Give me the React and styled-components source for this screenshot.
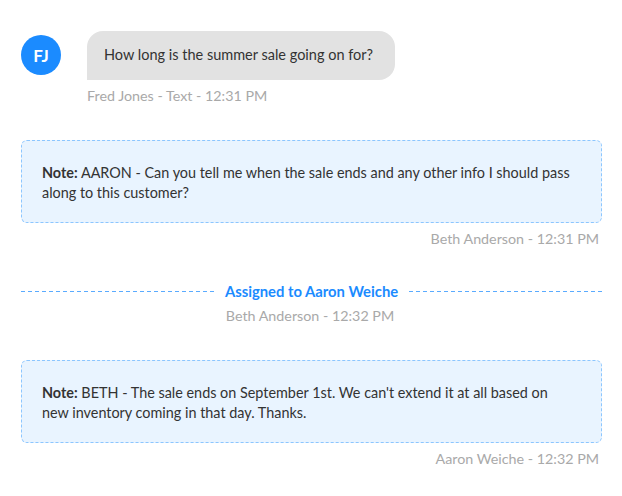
import styled, { createGlobalStyle } from "styled-components";

const GlobalStyle = createGlobalStyle`
  body {
    margin: 0;
    background: #ffffff;
    font-family: "Lato", "Noto Sans", sans-serif;
  }
`;

const Thread = () => {
  return (
    <>
      <GlobalStyle />
      <Page>
        <MessageRow>
          <Avatar>FJ</Avatar>
          <MessageBody>
            <Bubble>How long is the summer sale going on for?</Bubble>
            <Meta>Fred Jones - Text - 12:31 PM</Meta>
          </MessageBody>
        </MessageRow>

        <NoteBlock>
          <NoteBox>
            <strong>Note:</strong> AARON - Can you tell me when the sale ends
            and any other info I should pass along to this customer?
          </NoteBox>
          <Meta align="right">Beth Anderson - 12:31 PM</Meta>
        </NoteBlock>

        <EventBlock>
          <Divider>
            <DividerText>Assigned to Aaron Weiche</DividerText>
          </Divider>
          <Meta align="center">Beth Anderson - 12:32 PM</Meta>
        </EventBlock>

        <NoteBlock>
          <NoteBox>
            <strong>Note:</strong> BETH - The sale ends on September 1st. We
            can't extend it at all based on new inventory coming in that day.
            Thanks.
          </NoteBox>
          <Meta align="right">Aaron Weiche - 12:32 PM</Meta>
        </NoteBlock>
      </Page>
    </>
  );
};

const Page = styled.div`
  width: 622px;
  box-sizing: border-box;
  padding: 31px 20px 0 21px;
  display: flex;
  flex-direction: column;
`;

const MessageRow = styled.div`
  display: flex;
  align-items: flex-start;
  gap: 26px;
`;

const Avatar = styled.div`
  width: 40px;
  height: 40px;
  margin-top: 4px;
  border-radius: 50%;
  background: #1b8bff;
  color: #fff;
  font-weight: 700;
  font-size: 17px;
  display: flex;
  align-items: center;
  justify-content: center;
  flex-shrink: 0;
`;

const MessageBody = styled.div`
  display: flex;
  flex-direction: column;
  align-items: flex-start;
`;

const Bubble = styled.div`
  background: #e2e2e2;
  color: #333;
  font-size: 14.5px;
  line-height: 20px;
  padding: 14px 22px 15px 17px;
  border-radius: 16px 16px 16px 0;
`;

const Meta = styled.div`
  font-size: 14.3px;
  line-height: 18px;
  color: #a9a9a9;
  margin-top: 7px;
  padding-right: 3px;
  text-align: ${(p) => p.align || "left"};
`;

const NoteBlock = styled.div`
  display: flex;
  flex-direction: column;
  margin-top: 35px;
`;

const NoteBox = styled.div`
  background: #e9f4ff;
  border: 1px dashed #8cc6ff;
  border-radius: 6px;
  padding: 22px 26px 19px 20px;
  color: #333;
  font-size: 14.4px;
  line-height: 20px;

  strong {
    font-weight: 700;
  }
`;

const EventBlock = styled.div`
  display: flex;
  flex-direction: column;
  margin-top: 34px;
`;

const Divider = styled.div`
  display: flex;
  align-items: center;
  gap: 11px;

  &::before,
  &::after {
    content: "";
    flex: 1;
    height: 1px;
    background: repeating-linear-gradient(
      to right,
      #5aabff 0 4px,
      transparent 4px 7px
    );
  }
`;

const DividerText = styled.span`
  color: #1b8bff;
  font-weight: 700;
  font-size: 14.8px;
  line-height: 18px;
`;

export default Thread;
